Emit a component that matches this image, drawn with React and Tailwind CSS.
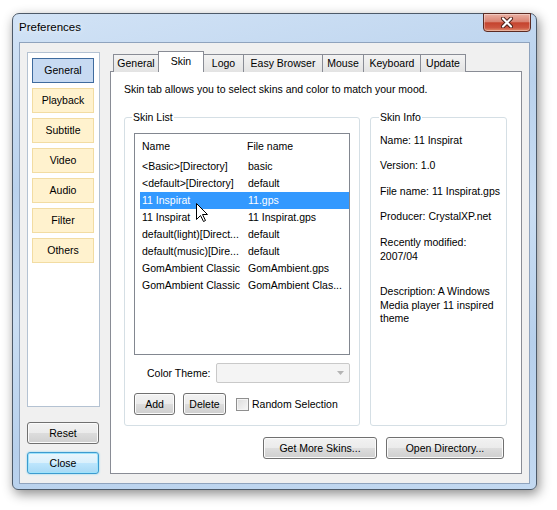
import React from 'react';

const sections = ['Playback', 'Subtitle', 'Video', 'Audio', 'Filter', 'Others'];

const tabs = [
  { label: 'General', w: 'w-[46px]' },
  { label: 'Skin', w: 'w-[46px]', active: true },
  { label: 'Logo', w: 'w-[41px]' },
  { label: 'Easy Browser', w: 'w-[80px]' },
  { label: 'Mouse', w: 'w-[42px]' },
  { label: 'Keyboard', w: 'w-[58px]' },
  { label: 'Update', w: 'w-[46px]' },
];

const skins = [
  ['<Basic>[Directory]', 'basic'],
  ['<default>[Directory]', 'default'],
  ['11 Inspirat', '11.gps'],
  ['11 Inspirat', '11 Inspirat.gps'],
  ['default(light)[Direct...', 'default'],
  ['default(music)[Dire...', 'default'],
  ['GomAmbient Classic', 'GomAmbient.gps'],
  ['GomAmbient Classic', 'GomAmbient Clas...'],
];

// classic Win7 push button look
const btn =
  'flex items-center justify-center rounded-[3px] border border-[#707070] bg-[linear-gradient(to_bottom,#f2f2f2_0%,#ebebeb_50%,#dddddd_50%,#cfcfcf_100%)] shadow-[inset_0_0_0_1px_#fbfbfb] text-black';

function Button({ className, children }) {
  return <div className={`${btn} ${className}`}>{children}</div>;
}

function CloseGlyph() {
  return (
    <svg width="14" height="11" viewBox="0 0 14 11">
      <path d="M3 1.5 L11 9.5 M11 1.5 L3 9.5" stroke="#4a1e16" strokeWidth="4" strokeLinecap="round" />
      <path d="M3 1.5 L11 9.5 M11 1.5 L3 9.5" stroke="#ffffff" strokeWidth="2.2" strokeLinecap="round" />
    </svg>
  );
}

function Cursor() {
  return (
    <svg width="13" height="20" viewBox="0 0 13 20" className="absolute left-[61px] top-[69px]">
      <path d="M0.5 0.5 V16.5 L4.5 12.5 L7.5 18.5 L9.5 17.5 L6.5 11.5 H11.5 Z" fill="#ffffff" stroke="#000000" strokeWidth="1" strokeLinejoin="miter" />
    </svg>
  );
}

function SkinList() {
  return (
    <div className="relative ml-[9px] mt-[15px] h-[222px] w-[216px] border border-[#828790] bg-white">
      <div className="flex h-[24px] items-center">
        <div className="w-[109px] pl-[7px]">Name</div>
        <div className="pl-[3px]">File name</div>
      </div>
      {skins.map(([name, file], i) => (
        <div
          key={i}
          className={`ml-[5px] flex h-[17px] items-center ${i === 2 ? 'bg-[#3399ff] text-white' : ''}`}
        >
          <div className="w-[104px] whitespace-nowrap pl-[2px]">{name}</div>
          <div className="whitespace-nowrap pl-[4px]">{file}</div>
        </div>
      ))}
      <Cursor />
    </div>
  );
}

export default function App() {
  return (
    <div className="min-h-screen bg-white pl-[12px] pt-[13px] font-['Liberation_Sans',Arial,sans-serif] text-[10.5px] leading-[13px] text-black">
      <div className="flex h-[477px] w-[525px] flex-col rounded-t-[7px] rounded-b-[6px] border border-[#4d5a69] bg-[linear-gradient(168deg,#d2e3f6_0%,#bad2ed_30%,#cadef3_52%,#b7d0ec_75%,#c3d9f1_100%)] px-[6px] pb-[5px] shadow-[2px_4px_12px_rgba(0,0,0,0.45)]">
        {/* title bar */}
        <div className="flex h-[28px] items-start justify-between">
          <div className="mt-[7px] text-[11.5px] [text-shadow:0_0_6px_#ffffff]">Preferences</div>
          <div className="-mr-px -mt-px flex h-[19px] w-[48px] items-center justify-center rounded-b-[4px] border border-[#5b2a22] bg-[linear-gradient(to_bottom,#eab0a3_0%,#d98372_45%,#c5442e_52%,#cc5540_80%,#e2906f_100%)] shadow-[inset_0_0_0_1px_rgba(255,255,255,0.35)]">
            <CloseGlyph />
          </div>
        </div>

        {/* client area */}
        <div className="flex h-[442px] border border-[#8fa3bd] bg-[#f0f0f0] pt-[8px]">
          {/* left section list */}
          <div className="ml-[7px] mt-[1px] flex w-[73px] flex-col">
            <div className="flex h-[355px] flex-col gap-[5px] border border-[#b4c2d2] bg-white px-[4px] pt-[5px]">
              <div className="flex h-[25px] w-[62px] items-center justify-center border border-[#3f6b9e] bg-[#c7daf2]">General</div>
              {sections.map((s) => (
                <div key={s} className="flex h-[25px] w-[62px] items-center justify-center border border-[#f2dca2] bg-[#fff2ce]">
                  {s}
                </div>
              ))}
            </div>
            <Button className="mt-[15px] h-[22px] w-[72px]">Reset</Button>
            <div className="mt-[8px] flex h-[22px] w-[72px] items-center justify-center rounded-[3px] border border-[#3c9bd0] bg-[linear-gradient(to_bottom,#eaf6fd_0%,#d9f0fc_50%,#bee6fd_50%,#a7d9f5_100%)] shadow-[inset_0_0_0_1px_#9fe3fb,0_0_2px_#6fcfee]">
              Close
            </div>
          </div>

          {/* tabs + page */}
          <div className="ml-[10px] flex w-[412px] flex-col">
            <div className="relative z-10 -mb-px flex h-[21px] items-end pl-[3px]">
              {tabs.map((t, i) => (
                <div
                  key={t.label}
                  className={`flex shrink-0 justify-center border border-b-0 border-[#898c95] ${t.w} ${i > 0 ? '-ml-px' : ''} ${
                    t.active
                      ? 'relative z-10 h-[21px] bg-white pt-[3px]'
                      : 'h-[18px] items-center bg-[linear-gradient(to_bottom,#f3f3f3,#e3e3e3)]'
                  }`}
                >
                  {t.label}
                </div>
              ))}
            </div>

            <div className="flex h-[403px] flex-col border border-[#898c95] bg-white">
              <p className="ml-[13px] mt-[11px]">Skin tab allows you to select skins and color to match your mood.</p>

              <div className="ml-[13px] mt-[21px] flex">
                {/* Skin List group */}
                <div className="relative flex h-[309px] w-[236px] flex-col rounded-[3px] border border-[#d5dfe5]">
                  <span className="absolute -top-[7px] left-[7px] bg-white px-[1px]">Skin List</span>
                  <SkinList />
                  <div className="mt-[8px] flex items-center pl-[22px]">
                    <span>Color Theme:</span>
                    <div className="ml-[6px] flex h-[20px] w-[134px] items-center justify-end rounded-[2px] border border-[#c9c9c9] bg-[#f4f4f4] pr-[5px]">
                      <svg width="7" height="4" viewBox="0 0 7 4">
                        <path d="M0 0 H7 L3.5 4 Z" fill="#b4b4b4" />
                      </svg>
                    </div>
                  </div>
                  <div className="ml-[9px] mt-[10px] flex items-center">
                    <Button className="h-[22px] w-[41px]">Add</Button>
                    <Button className="ml-[8px] h-[22px] w-[43px]">Delete</Button>
                    <div className="ml-[10px] h-[13px] w-[13px] border border-[#8f8f8f] bg-[linear-gradient(135deg,#dcdcdc,#f7f7f7)] shadow-[inset_0_0_0_1px_#f4f4f4]" />
                    <span className="ml-[3px]">Random Selection</span>
                  </div>
                </div>

                {/* Skin Info group */}
                <div className="relative ml-[10px] flex h-[309px] w-[137px] flex-col rounded-[3px] border border-[#d5dfe5] pl-[9px] pt-[16px] leading-[13.5px]">
                  <span className="absolute -top-[7px] left-[8px] bg-white px-[1px] leading-[13px]">Skin Info</span>
                  <p>Name: 11 Inspirat</p>
                  <p className="mt-[11px]">Version: 1.0</p>
                  <p className="mt-[13px]">File name: 11 Inspirat.gps</p>
                  <p className="mt-[11px]">Producer: CrystalXP.net</p>
                  <p className="mt-[13px]">
                    Recently modified:
                    <br />
                    2007/04
                  </p>
                  <p className="mt-[22px]">Description: A Windows Media player 11 inspired theme</p>
                </div>
              </div>

              <div className="mr-[17px] mt-[11px] flex justify-end gap-[9px]">
                <Button className="h-[22px] w-[114px]">Get More Skins...</Button>
                <Button className="h-[22px] w-[118px]">Open Directory...</Button>
              </div>
            </div>
          </div>
        </div>
      </div>
    </div>
  );
}
